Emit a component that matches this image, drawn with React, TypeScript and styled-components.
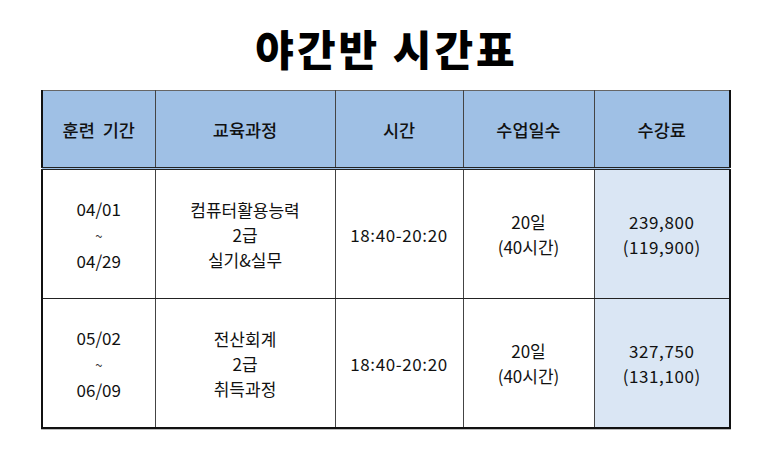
import styled, { createGlobalStyle } from 'styled-components';

const GlobalStyle = createGlobalStyle`
	body {
		margin: 0;
		background: #ffffff;
		font-family: 'Noto Sans CJK KR', 'Noto Sans', sans-serif;
		color: #111111;
	}
`;

type Course = {
	period: [string, string];
	course: string[];
	time: string;
	days: [string, string];
	fee: [string, string];
};

const courses: Course[] = [
	{
		period: ['04/01', '04/29'],
		course: ['컴퓨터활용능력', '2급', '실기&실무'],
		time: '18:40-20:20',
		days: ['20일', '(40시간)'],
		fee: ['239,800', '(119,900)'],
	},
	{
		period: ['05/02', '06/09'],
		course: ['전산회계', '2급', '취득과정'],
		time: '18:40-20:20',
		days: ['20일', '(40시간)'],
		fee: ['327,750', '(131,100)'],
	},
];

const columns = [
	{ label: '훈련 기간', width: 113 },
	{ label: '교육과정', width: 180 },
	{ label: '시간', width: 128 },
	{ label: '수업일수', width: 131 },
	{ label: '수강료', width: 136 },
];

export default function App() {
	return (
		<Page>
			<GlobalStyle />
			<Title>야간반 시간표</Title>
			<Table>
				<colgroup>
					{columns.map((c) => (
						<col key={c.label} style={{ width: c.width }} />
					))}
				</colgroup>
				<thead>
					<tr>
						{columns.map((c) => (
							<HeadCell key={c.label}>{c.label.replace(' ', '\u00a0\u00a0')}</HeadCell>
						))}
					</tr>
				</thead>
				<tbody>
					{courses.map((row) => (
						<tr key={row.period[0]}>
							<Cell>
								{row.period[0]}
								<br />
								<Tilde>~</Tilde>
								<br />
								{row.period[1]}
							</Cell>
							<Cell>
								{row.course.map((line, i) => (
									<Line key={i}>{line}</Line>
								))}
							</Cell>
							<Cell>
								<Wide>{row.time}</Wide>
							</Cell>
							<Cell>
								{row.days[0]}
								<br />
								{row.days[1]}
							</Cell>
							<Cell $shaded>
								<Wide>{row.fee[0]}</Wide>
								<br />
								<Wide>{row.fee[1]}</Wide>
							</Cell>
						</tr>
					))}
				</tbody>
			</Table>
		</Page>
	);
}

const Page = styled.div`
	width: 773px;
	height: 469px;
	padding-top: 18px;
	box-sizing: border-box;
`;

const Title = styled.h1`
	margin: 0 0 12px;
	height: 60px;
	line-height: 60px;
	text-align: center;
	font-size: 42px;
	font-weight: 900;
	letter-spacing: 3px;
	color: #000000;
`;

const Table = styled.table`
	margin-left: 41px;
	width: 688px;
	table-layout: fixed;
	border-collapse: collapse;
	border-top: 1px solid #666666;
	border-left: 2px solid #111111;
	border-right: 2px solid #111111;
	border-bottom: 2px solid #111111;
	box-shadow: 0 1px 0 #bbbbbb;
`;

const HeadCell = styled.th`
	height: 76px;
	padding: 0;
	background: #9fc0e5;
	border-left: 1px solid #444444;
	border-bottom: 3px double #222222;
	font-size: 17.5px;
	font-weight: 500;
	text-align: center;
	vertical-align: middle;
	white-space: pre;
`;

const Cell = styled.td<{ $shaded?: boolean }>`
	height: 128px;
	padding: 0;
	background: ${({ $shaded }) => ($shaded ? '#dae6f4' : '#ffffff')};
	border-left: 1px solid #444444;
	border-bottom: 1px solid #222222;
	font-size: 17px;
	line-height: 25px;
	text-align: center;
	vertical-align: middle;
`;

const Line = styled.div`
	line-height: 25px;
`;

const Wide = styled.span`
	letter-spacing: 0.6px;
`;

const Tilde = styled.span`
	font-size: 13px;
	color: #333333;
`;
